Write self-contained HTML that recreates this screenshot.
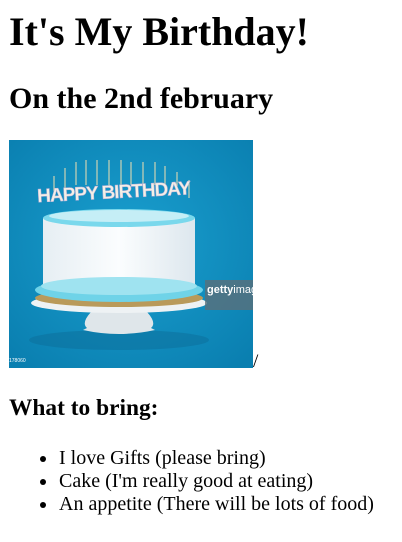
<!DOCTYPE html>
<html><head><meta charset="utf-8"><style>
html,body{margin:0;padding:0;background:#fff;width:402px;height:542px;overflow:hidden}
body{font-family:"Liberation Serif",serif;color:#000;position:relative}
.a{position:absolute;margin:0;white-space:nowrap}
h1{font-size:40px;line-height:1;left:9px;top:12px;font-weight:bold}
h2{font-size:30px;line-height:1;left:9px;top:84px;font-weight:bold}
h3{font-size:23.4px;line-height:1;left:9px;top:397px;font-weight:bold}
ul{list-style:none;padding:0;left:0;top:447px;font-size:20px;line-height:23px}
li{position:relative;padding-left:59px}
li:before{content:"";position:absolute;left:40px;top:9px;width:6px;height:6px;border-radius:50%;background:#000}
.sl{left:253px;top:350px;font-size:19.2px;line-height:23px}
</style></head><body>
<h1 class="a">It's My Birthday!</h1>
<h2 class="a">On the 2nd february</h2>
<svg class="a" style="left:9px;top:140px" width="244" height="228" viewBox="0 0 244 228">
<defs>
<radialGradient id="bg" cx="0.5" cy="0.45" r="0.7"><stop offset="0" stop-color="#1a9fcf"/><stop offset="1" stop-color="#0a7fb0"/></radialGradient>
<linearGradient id="ck" x1="0" x2="1"><stop offset="0" stop-color="#e6eef3"/><stop offset="0.5" stop-color="#fbfdfe"/><stop offset="1" stop-color="#dde7ee"/></linearGradient>
</defs>
<rect width="244" height="228" fill="url(#bg)"/>
<ellipse cx="110" cy="200" rx="90" ry="10" fill="#0b6e9a" opacity="0.5"/>
<path d="M82 172 Q72 183 78 188 L74 190 Q110 198 146 190 L142 188 Q148 183 138 172 Z" fill="#dfe6ea"/>
<ellipse cx="110" cy="163" rx="88" ry="10" fill="#eef2f4"/>
<ellipse cx="110" cy="158" rx="84" ry="9" fill="#b99a5a"/>
<rect x="34" y="78" width="152" height="72" fill="url(#ck)"/>
<ellipse cx="110" cy="150" rx="84" ry="12" fill="#6fd3e8"/>
<ellipse cx="110" cy="146" rx="78" ry="9" fill="#9fe3f0"/>
<ellipse cx="110" cy="78" rx="76" ry="9" fill="#7ad8ec"/>
<ellipse cx="110" cy="76" rx="70" ry="6" fill="#c5eef6"/>
<rect x="196" y="140" width="48" height="30" fill="#5a6f7a" opacity="0.8"/>
<text x="198" y="153" font-family="Liberation Sans,sans-serif" font-size="11" font-weight="bold" fill="#fff">getty<tspan font-weight="normal">imag</tspan></text>
<text x="0" y="222" font-family="Liberation Sans,sans-serif" font-size="5" fill="#fff">178060</text>
<g stroke="#f2e0b0" stroke-width="1">
<path d="M45 55V36M56 50V28M67 45V22M77 45V20M88 45V20M100 45V20M112 45V20M122 45V22M134 45V22M146 45V22M156 48V26M168 52V32M180 58V40"/>
</g>
<text x="28" y="58" font-family="Liberation Sans,sans-serif" font-size="19" font-weight="bold" fill="#f3f0e6" stroke="#c0b0d8" stroke-width="0.5" letter-spacing="-1" transform="rotate(-3 110 50)">HAPPY BIRTHDAY</text>
</svg>
<div class="a sl">/</div>
<h3 class="a">What to bring:</h3>
<ul class="a">
<li>I love Gifts (please bring)</li>
<li>Cake (I'm really good at eating)</li>
<li>An appetite (There will be lots of food)</li>
</ul>
</body></html>
